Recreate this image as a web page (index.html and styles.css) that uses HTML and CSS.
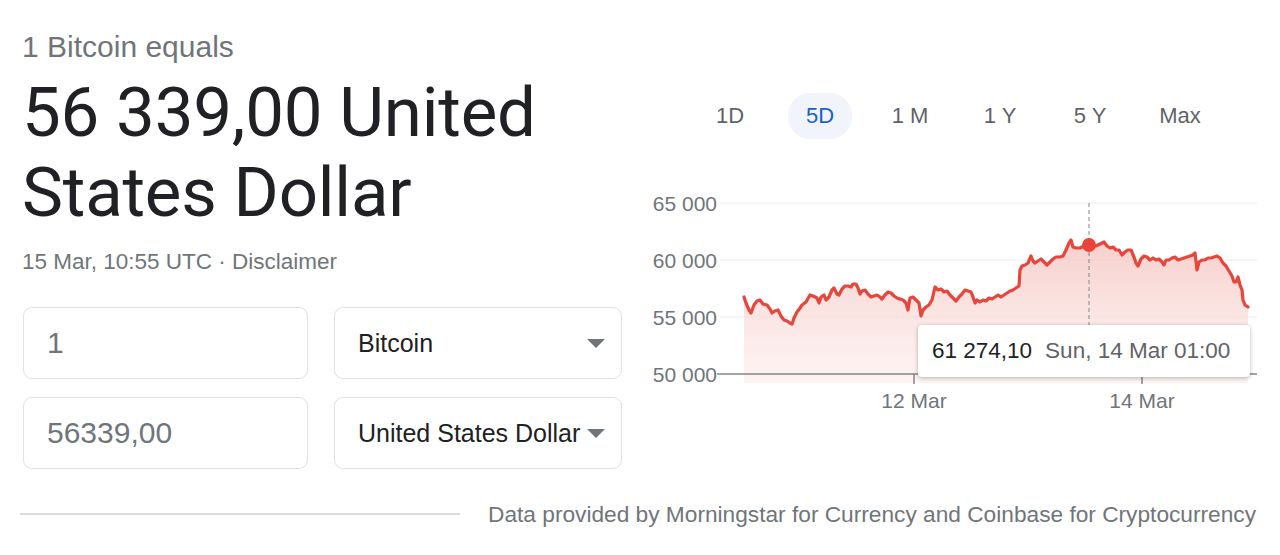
FILE: index.html
```html
<!DOCTYPE html>
<html lang="en">
<head>
<meta charset="utf-8">
<title>Bitcoin to USD</title>
<link rel="stylesheet" href="styles.css">
</head>
<body>
<div class="page">
  <div class="main">
    <section class="left">
      <div class="subtitle">1 Bitcoin equals</div>
      <h1 class="heading">56 339,00 United States Dollar</h1>
      <div class="meta">15 Mar, 10:55 UTC · Disclaimer</div>
      <div class="converter">
        <div class="field"><span class="amount">1</span></div>
        <div class="field select"><span class="currency">Bitcoin</span><span class="caret"></span></div>
        <div class="field"><span class="amount">56339,00</span></div>
        <div class="field select"><span class="currency">United States Dollar</span><span class="caret"></span></div>
      </div>
    </section>
    <section class="right">
      <div class="tabs">
        <span class="tab">1D</span>
        <span class="tab active">5D</span>
        <span class="tab">1 M</span>
        <span class="tab">1 Y</span>
        <span class="tab">5 Y</span>
        <span class="tab">Max</span>
      </div>
      <div class="chart">
        <svg class="chart-svg" width="640" height="230" viewBox="640 185 640 230" xmlns="http://www.w3.org/2000/svg">
          <defs>
            <linearGradient id="fillGrad" x1="0" y1="0" x2="0" y2="1">
              <stop offset="0" stop-color="#f4c7c2" stop-opacity="0.85"/>
              <stop offset="1" stop-color="#fce8e6" stop-opacity="0.5"/>
            </linearGradient>
          </defs>
          <g class="grid">
            <line x1="720" y1="203" x2="1257" y2="203"/>
            <line x1="720" y1="260" x2="1257" y2="260"/>
            <line x1="720" y1="317" x2="1257" y2="317"/>
          </g>
          <g class="ylabels">
            <text x="717" y="210.5">65 000</text>
            <text x="717" y="267.5">60 000</text>
            <text x="717" y="324.5">55 000</text>
            <text x="717" y="381.5">50 000</text>
          </g>
          <path class="area" d="M744,297 L746,303 L749,310 L751,313 L754,305 L757,301 L760,300 L763,304 L767,305 L770,309 L772,313 L775,311 L778,310 L781,316 L784,320 L787,321 L790,323 L792,324 L794,318 L797,312 L800,308 L802,305 L806,302 L810,295 L813,296 L817,298 L819,303 L821,297 L824,295 L826,300 L829,297 L832,290 L834,288 L837,294 L839,295 L842,289 L845,286 L848,286 L851,287 L853,284 L856,284 L858,288 L860,294 L862,291 L865,290 L868,294 L871,297 L874,296 L877,295 L880,297 L882,299 L885,295 L888,292 L891,293 L894,296 L897,298 L900,299 L903,300 L906,303 L908,310 L910,298 L913,297 L916,300 L919,303 L921,316 L923,310 L926,307 L929,305 L932,300 L935,287 L938,290 L941,289 L944,292 L947,291 L950,295 L953,298 L956,301 L959,297 L962,294 L965,290 L968,291 L971,292 L973,297 L975,303 L977,300 L980,302 L983,300 L986,301 L989,298 L992,299 L995,297 L998,295 L1001,297 L1004,295 L1007,293 L1010,291 L1013,290 L1016,288 L1019,286 L1020,270 L1022,266 L1025,265 L1028,263 L1031,256 L1033,261 L1035,263 L1038,261 L1041,259 L1044,262 L1047,265 L1050,262 L1053,259 L1056,257 L1060,257 L1063,256 L1066,250 L1069,243 L1071,240 L1073,247 L1076,248 L1080,248 L1084,246 L1088,244 L1092,246 L1096,246 L1100,244 L1104,242 L1107,246 L1110,248 L1113,247 L1116,250 L1119,250 L1122,255 L1125,252 L1128,250 L1131,250 L1134,257 L1136,263 L1138,266 L1141,259 L1144,256 L1147,257 L1150,260 L1153,258 L1156,260 L1159,259 L1162,262 L1164,265 L1166,260 L1169,260 L1172,258 L1175,257 L1178,260 L1181,259 L1184,258 L1187,257 L1190,256 L1193,255 L1195,253 L1197,270 L1199,262 L1202,260 L1205,260 L1208,258 L1211,258 L1214,257 L1217,256 L1220,258 L1223,263 L1226,266 L1229,271 L1232,276 L1234,282 L1236,282 L1238,277 L1240,285 L1242,290 L1243,300 L1245,305 L1248,307 L1248,383 L744,383 Z"/>
          <line class="axis" x1="717" y1="374" x2="1257" y2="374"/>
          <line class="tick" x1="914" y1="374" x2="914" y2="384"/>
          <line class="tick" x1="1142" y1="374" x2="1142" y2="384"/>
          <g class="xlabels">
            <text x="914" y="408">12 Mar</text>
            <text x="1142" y="408">14 Mar</text>
          </g>
          <path class="line" d="M744,297 L746,303 L749,310 L751,313 L754,305 L757,301 L760,300 L763,304 L767,305 L770,309 L772,313 L775,311 L778,310 L781,316 L784,320 L787,321 L790,323 L792,324 L794,318 L797,312 L800,308 L802,305 L806,302 L810,295 L813,296 L817,298 L819,303 L821,297 L824,295 L826,300 L829,297 L832,290 L834,288 L837,294 L839,295 L842,289 L845,286 L848,286 L851,287 L853,284 L856,284 L858,288 L860,294 L862,291 L865,290 L868,294 L871,297 L874,296 L877,295 L880,297 L882,299 L885,295 L888,292 L891,293 L894,296 L897,298 L900,299 L903,300 L906,303 L908,310 L910,298 L913,297 L916,300 L919,303 L921,316 L923,310 L926,307 L929,305 L932,300 L935,287 L938,290 L941,289 L944,292 L947,291 L950,295 L953,298 L956,301 L959,297 L962,294 L965,290 L968,291 L971,292 L973,297 L975,303 L977,300 L980,302 L983,300 L986,301 L989,298 L992,299 L995,297 L998,295 L1001,297 L1004,295 L1007,293 L1010,291 L1013,290 L1016,288 L1019,286 L1020,270 L1022,266 L1025,265 L1028,263 L1031,256 L1033,261 L1035,263 L1038,261 L1041,259 L1044,262 L1047,265 L1050,262 L1053,259 L1056,257 L1060,257 L1063,256 L1066,250 L1069,243 L1071,240 L1073,247 L1076,248 L1080,248 L1084,246 L1088,244 L1092,246 L1096,246 L1100,244 L1104,242 L1107,246 L1110,248 L1113,247 L1116,250 L1119,250 L1122,255 L1125,252 L1128,250 L1131,250 L1134,257 L1136,263 L1138,266 L1141,259 L1144,256 L1147,257 L1150,260 L1153,258 L1156,260 L1159,259 L1162,262 L1164,265 L1166,260 L1169,260 L1172,258 L1175,257 L1178,260 L1181,259 L1184,258 L1187,257 L1190,256 L1193,255 L1195,253 L1197,270 L1199,262 L1202,260 L1205,260 L1208,258 L1211,258 L1214,257 L1217,256 L1220,258 L1223,263 L1226,266 L1229,271 L1232,276 L1234,282 L1236,282 L1238,277 L1240,285 L1242,290 L1243,300 L1245,305 L1248,307"/>
          <line class="cursor" x1="1089" y1="203" x2="1089" y2="326"/>
          <circle class="dot" cx="1089" cy="245" r="7"/>
        </svg>
        <div class="tooltip"><span class="tip-value">61 274,10</span><span class="tip-date">Sun, 14 Mar 01:00</span></div>
      </div>
    </section>
  </div>
  <footer class="footer">
    <span class="rule"></span>
    <span class="source">Data provided by Morningstar for Currency and Coinbase for Cryptocurrency</span>
  </footer>
</div>
</body>
</html>
```
FILE: styles.css
```css
* { box-sizing: border-box; }
html, body { margin: 0; padding: 0; background: #fff; }
body { font-family: "Liberation Sans", Arial, sans-serif; color: #202124; }

.page { width: 1280px; height: 555px; overflow: hidden; padding-top: 32px; }
.main { display: flex; }

.left { width: 640px; padding-left: 22px; }
.subtitle { font-size: 30px; line-height: 30px; color: #70757a; }
.heading {
  margin: 11px 0 0;
  width: 600px;
  font-family: Roboto, "Liberation Sans", sans-serif;
  font-weight: 400;
  font-size: 69px;
  line-height: 80px;
  color: #202124;
  letter-spacing: -0.2px;
}
.meta { margin-top: 17px; font-size: 22.5px; line-height: 24px; color: #70757a; }

.converter {
  margin-top: 33px;
  margin-left: 1px;
  display: grid;
  grid-template-columns: 285px 288px;
  grid-auto-rows: 72px;
  column-gap: 26px;
  row-gap: 18px;
}
.field {
  border: 1px solid #dfe1e5;
  border-radius: 9px;
  display: flex;
  align-items: center;
  padding: 0 16px 0 23px;
}
.amount { font-size: 30px; color: #70757a; }
.currency { font-size: 25px; color: #202124; flex: 1; white-space: nowrap; }
.caret {
  width: 0; height: 0;
  border-left: 9px solid transparent;
  border-right: 9px solid transparent;
  border-top: 9px solid #70757a;
  margin-left: 4px;
}

.right { width: 640px; padding-top: 61px; }
.tabs { display: flex; gap: 26px; padding-left: 58px; }
.tab {
  width: 64px; height: 46px;
  display: flex; align-items: center; justify-content: center;
  font-size: 22px; color: #5f6368; border-radius: 22px;
}
.tab.active { background: #f1f5fb; color: #1a5fcf; }

.chart { position: relative; margin-top: 46px; width: 640px; height: 230px; }
.chart-svg { display: block; }
.grid line { stroke: #ececec; stroke-width: 1; }
.ylabels text { font-family: "Liberation Sans", Arial, sans-serif; font-size: 21px; fill: #70757a; text-anchor: end; }
.xlabels text { font-family: "Liberation Sans", Arial, sans-serif; font-size: 21px; fill: #70757a; text-anchor: middle; }
.axis { stroke: #80868b; stroke-width: 1.5; }
.tick { stroke: #80868b; stroke-width: 1.5; }
.area { fill: url(#fillGrad); stroke: none; }
.line { fill: none; stroke: #e8453c; stroke-width: 3.2; stroke-linejoin: round; stroke-linecap: round; }
.cursor { stroke: #80868b; stroke-width: 1; stroke-dasharray: 4 3; }
.dot { fill: #e8453c; }

.tooltip {
  position: absolute;
  left: 278px; top: 140px;
  width: 332px; height: 52px;
  background: #fff;
  border-radius: 4px;
  box-shadow: 0 1px 4px rgba(0,0,0,0.28);
  display: flex; align-items: center; gap: 13px;
  padding-left: 14px;
  font-size: 22.5px;
}
.tip-value { color: #202124; }
.tip-date { color: #5f6368; }

.footer {
  margin-top: 33px;
  display: flex;
  align-items: center;
  height: 24px;
  padding: 0 24px 0 20px;
}
.rule { width: 440px; height: 2px; background: #dadce0; }
.source { margin-left: auto; font-size: 22.7px; color: #70757a; white-space: nowrap; }
```
